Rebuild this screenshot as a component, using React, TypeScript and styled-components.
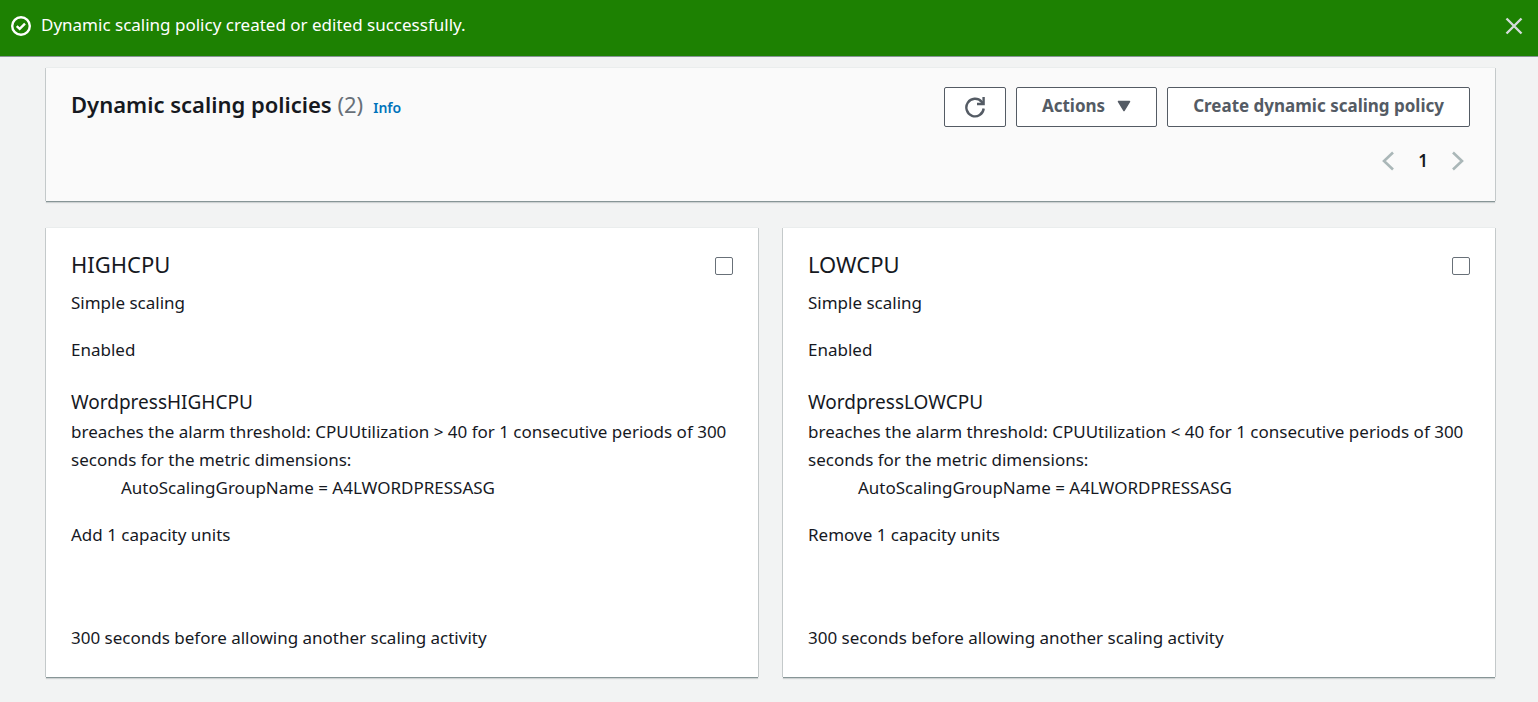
import React, { useState } from "react";
import styled, { createGlobalStyle } from "styled-components";

const GlobalStyle = createGlobalStyle`
  *, *::before, *::after { box-sizing: border-box; }
  body {
    margin: 0;
    min-height: 100vh;
    background: #f2f3f3;
    color: #16191f;
    font-family: "Noto Sans", "Open Sans", sans-serif;
    font-size: 17px;
    line-height: 28px;
  }
  h1, h2, h3, p { margin: 0; }
  button { font: inherit; }
`;

const Flash = styled.div`
  display: flex;
  align-items: flex-start;
  gap: 10px;
  min-height: 57px;
  padding: 11px 15px 10px 11px;
  background: #1d8102;
  border-bottom: 1px solid #879596;
  color: #ffffff;
`;

const FlashIcon = styled.svg`
  flex: none;
  width: 20px;
  height: 20px;
  margin-top: 5px;
`;

const FlashText = styled.p`
  flex: 1;
`;

const CloseButton = styled.button`
  display: flex;
  padding: 6px 0;
  border: 0;
  background: none;
  color: #d5dbdb;
  cursor: pointer;
`;

const Main = styled.main`
  display: grid;
  gap: 27px;
  padding: 11px 43px 24px 46px;
`;

const Panel = styled.section<{ $tinted?: boolean }>`
  background: ${(p) => (p.$tinted ? "#fafafa" : "#ffffff")};
  box-shadow:
    0 1px 0 0 #879596,
    0 2px 1px 0 rgba(0, 28, 36, 0.15),
    1px 0 0 0 #c9cecf,
    -1px 0 0 0 #c9cecf,
    0 -1px 0 0 #eaeded;
`;

const HeaderPanel = styled(Panel)`
  padding: 19px 25px 26px;
`;

const HeaderRow = styled.div`
  display: flex;
  justify-content: space-between;
  align-items: flex-start;
`;

const TitleGroup = styled.div`
  display: flex;
  align-items: baseline;
  gap: 10px;
`;

const Title = styled.h1`
  font-size: 22px;
  line-height: 34px;
  font-weight: 600;
`;

const Counter = styled.span`
  color: #687078;
  font-weight: 400;
`;

const InfoLink = styled.a`
  color: #0073bb;
  font-size: 14px;
  font-weight: 600;
  text-decoration: none;
`;

const Actions = styled.div`
  display: flex;
  gap: 10px;
`;

const Button = styled.button`
  display: flex;
  align-items: center;
  gap: 12px;
  height: 40px;
  padding: 0 25px 2px;
  border: 1px solid #545b64;
  border-radius: 2px;
  background: #ffffff;
  color: #545b64;
  font-weight: 700;
  white-space: nowrap;
  cursor: pointer;
`;

const IconButton = styled(Button)`
  justify-content: center;
  width: 62px;
  padding: 0;
`;

const Pagination = styled.nav`
  display: flex;
  justify-content: flex-end;
  align-items: center;
  gap: 23px;
  margin-top: 20px;
  padding-right: 5px;
`;

const PageArrow = styled.button`
  display: flex;
  padding: 0;
  border: 0;
  background: none;
  color: #aab7b8;
`;

const PageNumber = styled.button`
  padding: 0;
  border: 0;
  background: none;
  color: #16191f;
  font-weight: 600;
`;

const Cards = styled.div`
  display: grid;
  grid-template-columns: repeat(2, minmax(0, 1fr));
  gap: 25px;
`;

const Card = styled(Panel)`
  display: flex;
  flex-direction: column;
  gap: 19px;
  padding: 20px 25px 25px;
`;

const CardHeader = styled.label`
  display: flex;
  justify-content: space-between;
  align-items: center;
  margin-bottom: 9px;
  font-size: 22px;
  line-height: 32px;
`;

const CardName = styled.h2`
  font: inherit;
`;

const Checkbox = styled.input`
  appearance: none;
  width: 18px;
  height: 18px;
  margin: 4px 0 0;
  border: 1px solid #687078;
  border-radius: 2px;
  background: #ffffff;
  &:checked { background: #0073bb; }
`;

const AlarmName = styled.h3`
  margin-top: 4px;
  font-size: 19px;
  line-height: 31px;
  font-weight: 400;
`;

const Dimension = styled.p`
  padding-left: 50px;
`;

const Action = styled.p`
  min-height: 84px;
`;

type Policy = {
  name: string;
  alarm: string;
  threshold: string;
  action: string;
};

const policies: Policy[] = [
  { name: "HIGHCPU", alarm: "WordpressHIGHCPU", threshold: "CPUUtilization > 40", action: "Add 1 capacity units" },
  { name: "LOWCPU", alarm: "WordpressLOWCPU", threshold: "CPUUtilization < 40", action: "Remove 1 capacity units" },
];

function PolicyCard({ policy }: { policy: Policy }) {
  return (
    <Card>
      <div>
        <CardHeader>
          <CardName>{policy.name}</CardName>
          <Checkbox type="checkbox" />
        </CardHeader>
        <p>Simple scaling</p>
      </div>
      <p>Enabled</p>
      <div>
        <AlarmName>{policy.alarm}</AlarmName>
        <p>
          {`breaches the alarm threshold: ${policy.threshold} for 1 consecutive periods of 300 seconds for the metric dimensions:`}
        </p>
        <Dimension>AutoScalingGroupName = A4LWORDPRESSASG</Dimension>
      </div>
      <Action>{policy.action}</Action>
      <p>300 seconds before allowing another scaling activity</p>
    </Card>
  );
}

export default function App() {
  const [flash, setFlash] = useState(true);
  return (
    <>
      <GlobalStyle />
      {flash && (
        <Flash role="status">
          <FlashIcon viewBox="0 0 20 20" fill="none" stroke="currentColor" strokeWidth="2.4">
            <circle cx="10" cy="10" r="8.8" />
            <path d="M5.7 10.1l3 2.7 5.3-5.2" />
          </FlashIcon>
          <FlashText>Dynamic scaling policy created or edited successfully.</FlashText>
          <CloseButton aria-label="Close" onClick={() => setFlash(false)}>
            <svg width="18" height="18" viewBox="0 0 18 18" stroke="currentColor" strokeWidth="2.4">
              <path d="M1.5 1.5l15 15M16.5 1.5l-15 15" />
            </svg>
          </CloseButton>
        </Flash>
      )}
      <Main>
        <HeaderPanel $tinted>
          <HeaderRow>
            <TitleGroup>
              <Title>
                Dynamic scaling policies <Counter>(2)</Counter>
              </Title>
              <InfoLink href="#info">Info</InfoLink>
            </TitleGroup>
            <Actions>
              <IconButton aria-label="Refresh">
                <svg width="22" height="22" viewBox="0 0 22 22" fill="none" stroke="currentColor" strokeWidth="2.4">
                  <path d="M19.7 12.5A8.7 8.8 0 1 1 17.5 5.6L19 7.2" />
                  <path d="M19.600 1v7h-6.600" />
                </svg>
              </IconButton>
              <Button>
                Actions
                <svg width="14" height="12" viewBox="0 0 14 12" fill="currentColor">
                  <path d="M1.5 1.5h11L7 10.5z" stroke="currentColor" strokeWidth="1.5" strokeLinejoin="round" />
                </svg>
              </Button>
              <Button>Create dynamic scaling policy</Button>
            </Actions>
          </HeaderRow>
          <Pagination aria-label="Pages">
            <PageArrow aria-label="Previous page">
              <svg width="14" height="20" viewBox="0 0 14 20" fill="none" stroke="currentColor" strokeWidth="2.6">
                <path d="M12 1.5L3 10l9 8.5" />
              </svg>
            </PageArrow>
            <PageNumber aria-current="page">1</PageNumber>
            <PageArrow aria-label="Next page">
              <svg width="14" height="20" viewBox="0 0 14 20" fill="none" stroke="currentColor" strokeWidth="2.6">
                <path d="M2 1.5L11 10l-9 8.5" />
              </svg>
            </PageArrow>
          </Pagination>
        </HeaderPanel>
        <Cards>
          {policies.map((policy) => (
            <PolicyCard key={policy.name} policy={policy} />
          ))}
        </Cards>
      </Main>
    </>
  );
}
